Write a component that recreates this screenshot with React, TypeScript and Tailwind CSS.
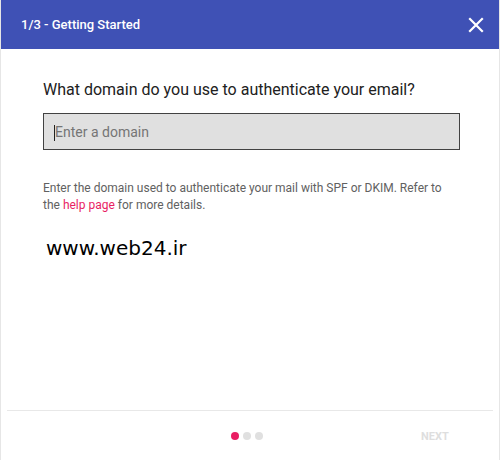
import React from "react";

export default function App() {
  return (
    <div className="w-[502px] h-[460px] bg-white overflow-hidden" style={{ fontFamily: "Roboto, 'Liberation Sans', sans-serif" }}>
      <div className="w-[500px] h-[460px] flex flex-col border-l border-r border-[#e6e6e6] bg-white">
        <div className="h-[49px] bg-[#3f51b5] flex items-center justify-between pl-[20px] pr-[15px] shrink-0">
          <span className="text-white text-[13px] font-medium">1/3 - Getting Started</span>
          <svg width="16" height="16" viewBox="0 0 16 16" className="text-white">
            <path d="M2 2 L14 14 M14 2 L2 14" stroke="currentColor" strokeWidth="2.2" strokeLinecap="square" />
          </svg>
        </div>
        <div className="flex-1 flex flex-col pl-[42px] pr-[39px] pt-[30px]">
          <h1 className="text-[16px] text-[#212121] leading-[22px]">What domain do you use to authenticate your email?</h1>
          <div className="mt-[12px] h-[37px] bg-[#e0e0e0] border border-[#424242] flex items-center pl-[10px] pt-[2px]">
            <span className="w-px h-[16px] bg-[#222]" />
            <span className="text-[14px] text-[#757575]">Enter a domain</span>
          </div>
          <p className="mt-[30px] text-[12px] leading-[17px] text-[#616161] pr-[10px]">
            Enter the domain used to authenticate your mail with SPF or DKIM. Refer to the <span className="text-[#e91e63]">help page</span> for more details.
          </p>
          <div className="mt-[21px] ml-[3px] text-[20px] text-black leading-[26px]" style={{ fontFamily: "'DejaVu Sans', sans-serif" }}>
            www.web24.ir
          </div>
        </div>
        <div className="mx-[6px] border-t border-[#e8e8e8]" />
        <div className="h-[49px] shrink-0 relative flex items-center">
          <div className="absolute left-[230px] top-[21px] flex gap-[4px]">
            <span className="w-[8px] h-[8px] rounded-full bg-[#e91e63]" />
            <span className="w-[8px] h-[8px] rounded-full bg-[#e0e0e0]" />
            <span className="w-[8px] h-[8px] rounded-full bg-[#e0e0e0]" />
          </div>
          <span className="absolute left-[420px] top-[20px] text-[11px] font-bold text-[#dedede] leading-[12px]">NEXT</span>
        </div>
      </div>
    </div>
  );
}
